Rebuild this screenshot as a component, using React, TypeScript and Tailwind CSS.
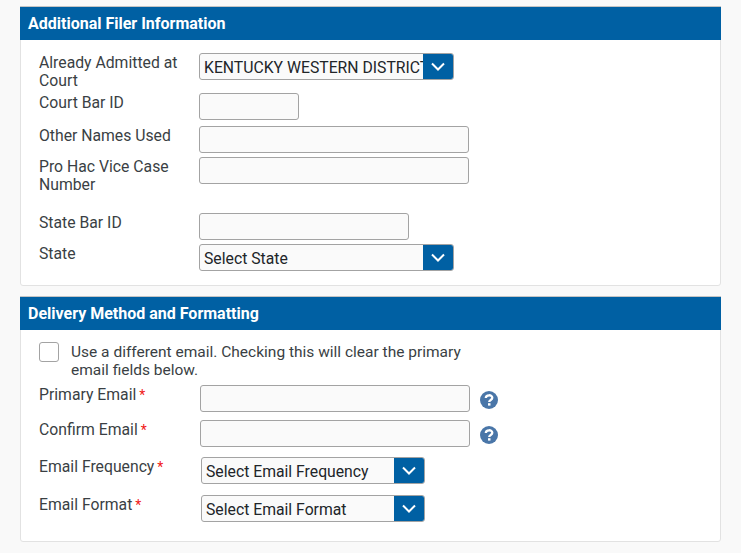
import React from 'react';

const fontStyle = "font-['Roboto',sans-serif]";

const Chevron: React.FC = () => (
  <svg width="16" height="10" viewBox="0 0 16 10" fill="none">
    <path d="M2 1.5 L8 7.5 L14 1.5" stroke="white" strokeWidth="2" />
  </svg>
);

const HelpIcon: React.FC = () => (
  <svg width="18" height="18" viewBox="0 0 18 18" className="ml-[10px] mt-[6px] shrink-0">
    <circle cx="9" cy="9" r="9" fill="#4a76a8" />
    <path d="M5.8 7 C5.8 3.4 12.3 3.4 12.3 6.8 C12.3 9 9.2 8.9 9.2 11" fill="none" stroke="white" strokeWidth="2.3" />
    <rect x="8" y="12.2" width="2.5" height="2.4" fill="white" />
  </svg>
);

const TextBox: React.FC<{ width: string }> = ({ width }) => (
  <div className={`${width} h-[27px] rounded-[3px] border border-[#a3a3a3] bg-[#fafafa] shrink-0`} />
);

const Select: React.FC<{ width: string; value: string }> = ({ width, value }) => (
  <div className={`${width} h-[27px] rounded-[3px] border border-[#a3a3a3] bg-[#fafafa] shrink-0 flex overflow-hidden`}>
    <div className="flex-1 min-w-0 pl-1 pt-px text-[15.75px] leading-[25px] text-[#212529] whitespace-nowrap overflow-hidden">{value}</div>
    <div className="w-[30px] bg-[#0060a3] flex items-center justify-center shrink-0">
      <Chevron />
    </div>
  </div>
);

const Req: React.FC = () => <span className="text-[#f01818] text-[14px] ml-[3px]">*</span>;

const Card: React.FC<{ title: string; children: React.ReactNode; className?: string }> = ({ title, children, className }) => (
  <section className={`mx-5 rounded-[3px] border border-[#e2e2e2] bg-white ${className ?? ''}`}>
    <h2 className="h-[34px] -mx-px -mt-px bg-[#0060a3] border-t border-[#c4c4c4] pl-2 text-[16px] font-bold leading-[33px] text-white">{title}</h2>
    {children}
  </section>
);

const Label: React.FC<{ children: React.ReactNode }> = ({ children }) => (
  <label className="w-[160px] shrink-0 pt-px text-[15.75px] leading-[18px] text-[#3a3f44]">{children}</label>
);

export default function App() {
  return (
    <div className={`w-[741px] h-[553px] overflow-hidden bg-[#f9f9f9] pt-[6px] ${fontStyle}`}>
      <Card title="Additional Filer Information" className="h-[280px]">
        <div className="pl-[18px] pt-[13px]">
          <div className="flex mb-1 h-[36px]"><Label>Already Admitted at Court</Label><Select width="w-[255px]" value="KENTUCKY WESTERN DISTRICT" /></div>
          <div className="flex mb-[6px]"><Label>Court Bar ID</Label><TextBox width="w-[100px]" /></div>
          <div className="flex mb-1"><Label>Other Names Used</Label><TextBox width="w-[270px]" /></div>
          <div className="flex mb-5 h-[36px]"><Label>Pro Hac Vice Case Number</Label><TextBox width="w-[270px]" /></div>
          <div className="flex mb-1"><Label>State Bar ID</Label><TextBox width="w-[210px]" /></div>
          <div className="flex"><Label>State</Label><Select width="w-[255px]" value="Select State" /></div>
        </div>
      </Card>
      <Card title="Delivery Method and Formatting" className="h-[246px] mt-[10px]">
        <div className="pl-[18px] pt-[12px]">
          <div className="flex mb-[7px]">
            <div className="w-5 h-5 rounded-[3px] border border-[#a3a3a3] bg-white shrink-0" />
            <p className="w-[400px] ml-3 pt-px text-[15.5px] leading-[18px] -mb-px text-[#3a3f44]">Use a different email. Checking this will clear the primary email fields below.</p>
          </div>
          <div className="flex mb-2"><div className="w-[161px] shrink-0 flex"><Label>Primary Email<Req /></Label></div><TextBox width="w-[270px]" /><HelpIcon /></div>
          <div className="flex mb-[10px]"><div className="w-[161px] shrink-0 flex"><Label>Confirm Email<Req /></Label></div><TextBox width="w-[270px]" /><HelpIcon /></div>
          <div className="flex mb-[11px]"><div className="w-[162px] shrink-0 flex"><Label>Email Frequency<Req /></Label></div><Select width="w-[224px]" value="Select Email Frequency" /></div>
          <div className="flex"><div className="w-[162px] shrink-0 flex"><Label>Email Format<Req /></Label></div><Select width="w-[224px]" value="Select Email Format" /></div>
        </div>
      </Card>
    </div>
  );
}
